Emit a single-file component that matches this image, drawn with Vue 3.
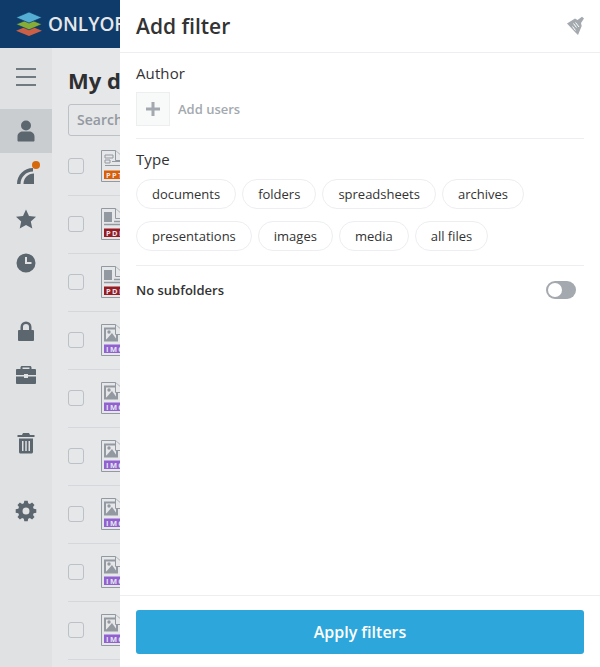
<template>
  <div class="app">
    <header class="topbar">
      <svg class="logo" width="26" height="24" viewBox="0 0 26 24">
        <path d="M13 13.500l13 5.200-13 5.300-13-5.300z" fill="#e2694a" />
        <path d="M13 7l13 5.300-13 5.500-13-5.500z" fill="#95c038" stroke="#0f4071" stroke-width="0.7" />
        <path d="M13 0l13 5.500L13 11 0 5.500z" fill="#5dc0e8" stroke="#0f4071" stroke-width="0.7" />
      </svg>
      <span class="brand">ONLYOFFICE</span>
    </header>

    <div class="body">
      <nav class="nav">
        <div class="burger"><i></i><i></i><i></i></div>
        <div
          v-for="item in navItems"
          :key="item.name"
          :class="['nav-item', { active: item.active, spaced: item.spaced }]"
        >
          <svg width="24" height="24" viewBox="0 0 24 24" fill="#657077">
            <path v-for="d in item.paths" :key="d" :d="d" fill-rule="evenodd" />
            <circle v-if="item.dot" cx="22" cy="2" r="4" fill="#ed7309" />
          </svg>
        </div>
      </nav>

      <main class="main">
        <h1 class="title">My documents</h1>
        <div class="search">Search</div>
        <div v-for="(file, i) in files" :key="i" class="row">
          <span class="check"></span>
          <svg class="file" width="32" height="32" viewBox="0 0 32 32">
            <path d="M.5.5h14l10 9v22H.5z" fill="#fff" stroke="#a3a9ae" />
            <template v-if="file.type === 'IMG'">
              <rect x="4" y="4.500" width="12" height="12" fill="#fff" stroke="#a3a9ae" stroke-width="2" />
              <path d="M5 16l6-7 5 7z" fill="#a3a9ae" />
              <circle cx="8" cy="8" r="1.700" fill="#a3a9ae" />
            </template>
            <template v-else-if="file.type === 'PDF'">
              <rect x="3" y="4" width="8" height="10" fill="#a3a9ae" />
              <path d="M13 13.500h11M3 16.500h21" stroke="#a3a9ae" stroke-width="1.500" />
            </template>
            <template v-else>
              <path d="M4 5h8v3H4zM4 10h5v3H4zM11 11.500h9M4 15.500h16" fill="none" stroke="#a3a9ae" />
            </template>
            <path d="M14.500.5v10h10" fill="#fff" stroke="#a3a9ae" />
            <rect x="3" y="20.500" width="28" height="8.500" :fill="file.color" />
            <text x="5" y="27.500" class="badge-text">{{ file.type }}</text>
          </svg>
        </div>
      </main>
    </div>

    <div class="shade"></div>

    <aside class="panel">
      <div class="panel-head">
        <h2 class="panel-title">Add filter</h2>
        <svg class="clean" width="20" height="20" viewBox="0 0 20 20">
          <path d="M1 7.500L9 2.500l2.500 1.500L16 .8 18 2.500l-3 4.500.7 3-3.700 9-3.500-3.500z" fill="#a3a9ae" />
          <path d="M7.500 7.500l3 4M9.500 6.500l3.500 4.500M6.500 10.500l3 4" stroke="#fff" stroke-width="1" />
        </svg>
      </div>

      <section class="group">
        <div class="label">Author</div>
        <div class="author">
          <span class="add-btn">
            <svg width="14" height="14" viewBox="0 0 14 14"><path d="M5.500 0h3v5.500H14v3H8.500V14h-3V8.500H0v-3h5.500z" fill="#a3a9ae" /></svg>
          </span>
          <span class="add-text">Add users</span>
        </div>
      </section>

      <section class="group type">
        <div class="label">Type</div>
        <div class="chips">
          <span v-for="t in types" :key="t" class="chip">{{ t }}</span>
        </div>
      </section>

      <section class="switch-row">
        <span class="switch-label">No subfolders</span>
        <span class="toggle"><span class="knob"></span></span>
      </section>

      <footer class="panel-foot">
        <button class="apply">Apply filters</button>
      </footer>
    </aside>
  </div>
</template>

<script setup>
const navItems = [
  {
    name: 'my',
    active: true,
    paths: ['M12 1.500a5 5 0 1 1 0 10 5 5 0 0 1 0-10zM3.500 21.500v-4c0-3.500 3-5 5-5h7c2 0 5 1.500 5 5v4c0 .5-.5 1-1 1h-15c-.5 0-1-.5-1-1z']
  },
  {
    name: 'shared',
    dot: true,
    paths: [
      'M3 21C3 12 10 5 19 5v3.500C12 8.500 6.500 14 6.500 21z',
      'M9.500 21C9.500 15 14 10.500 20 10.500V21z'
    ]
  },
  {
    name: 'favorites',
    paths: ['M12 2.500l3 6.500 7 .8-5.200 4.800 1.500 7L12 18l-6.300 3.600 1.500-7L2 9.800 9 9z']
  },
  {
    name: 'recent',
    paths: ['M12 2.500a9.500 9.500 0 1 1 0 19 9.500 9.500 0 0 1 0-19zM11 6v7h6.500v-2H13V6z']
  },
  {
    name: 'private',
    spaced: true,
    paths: ['M5 11h1.500V8a5.500 5.500 0 0 1 11 0v3H19c.5 0 1 .5 1 1v9c0 .5-.5 1-1 1H5c-.5 0-1-.5-1-1v-9c0-.5.500-1 1-1zM9 11h6V8a3 3 0 0 0-6 0z']
  },
  {
    name: 'rooms',
    paths: [
      'M8 3h8c.8 0 1.500.7 1.500 1.500V6H21c.5 0 1 .5 1 1v5h-8v-1h-4v1H2V7c0-.5.500-1 1-1h3.500V4.500C6.500 3.700 7.200 3 8 3zM8.500 4.500V6h7V4.500z',
      'M2 13.500h8V15h4v-1.500h8V20c0 .5-.5 1-1 1H3c-.5 0-1-.5-1-1z'
    ]
  },
  {
    name: 'trash',
    spaced: true,
    paths: ['M9 2h6l1 2h4.500v2h-17V4H8zM5 7.500h14V21c0 .8-.7 1.500-1.500 1.500h-11C5.700 22.500 5 21.800 5 21zM8 10v10h1.500V10zM11.250 10v10h1.500V10zM14.500 10v10H16V10z']
  },
  {
    name: 'settings',
    spaced: true,
    paths: ['M10.300 1.700h3.400l.5 2.600 1.700.7 2.200-1.500 2.400 2.400L19 8.100l.7 1.700 2.600.5v3.400l-2.600.5-.7 1.700 1.500 2.200-2.400 2.400-2.200-1.500-1.700.7-.5 2.600h-3.400l-.5-2.600-1.700-.7-2.200 1.500-2.400-2.400L5 15.900l-.7-1.700-2.600-.5v-3.400l2.600-.5.7-1.700-1.500-2.200 2.400-2.400L8.100 5l1.700-.7zM12 8.500a3.500 3.500 0 1 0 0 7 3.500 3.500 0 0 0 0-7z']
  }
]

const imageFile = { type: 'IMG', color: '#a16ae8' }
const files = [
  { type: 'PPTX', color: '#f36700' },
  { type: 'PDF', color: '#a81c22' },
  { type: 'PDF', color: '#a81c22' },
  imageFile,
  imageFile,
  imageFile,
  imageFile,
  imageFile,
  imageFile
]

const types = [
  'documents',
  'folders',
  'spreadsheets',
  'archives',
  'presentations',
  'images',
  'media',
  'all files'
]
</script>

<style>
body {
  margin: 0;
}
</style>

<style scoped>
.app {
  position: relative;
  width: 600px;
  height: 667px;
  overflow: hidden;
  background: #fff;
  font-family: 'Open Sans', sans-serif;
  color: #333;
}

.topbar {
  display: flex;
  align-items: center;
  gap: 6px;
  height: 48px;
  padding-left: 16px;
  box-sizing: border-box;
  background: #0f4071;
}

.logo {
  flex: none;
}

.brand {
  color: #fff;
  font-size: 19px;
  font-weight: 600;
  white-space: nowrap;
}

.body {
  display: flex;
  height: 619px;
}

.nav {
  flex: 0 0 52px;
  background: #f8f9f9;
  padding-top: 7px;
  box-sizing: border-box;
}

.burger {
  display: flex;
  flex-direction: column;
  justify-content: center;
  gap: 6px;
  height: 44px;
  padding: 0 16px;
  margin-bottom: 10px;
}

.burger i {
  display: block;
  height: 2px;
  background: #7d868c;
}

.nav-item {
  display: flex;
  align-items: center;
  justify-content: center;
  height: 44px;
}

.nav-item svg {
  overflow: visible;
}

.nav-item.active {
  background: #dfe2e3;
}

.nav-item.spaced {
  margin-top: 24px;
}

.main {
  flex: 1;
  padding: 16px 16px 0 16px;
  min-width: 0;
}

.title {
  margin: 0 0 8px;
  font-size: 22px;
  font-weight: 700;
  line-height: 32px;
  white-space: nowrap;
}

.search {
  box-sizing: border-box;
  height: 32px;
  padding-left: 8px;
  border: 1px solid #d0d5da;
  border-radius: 3px;
  font-size: 14px;
  font-weight: 600;
  line-height: 30px;
  color: #a3a9ae;
  margin-bottom: 2px;
}

.row {
  display: flex;
  align-items: center;
  box-sizing: border-box;
  height: 58px;
  padding-bottom: 1px;
  border-bottom: 1px solid #eceef1;
}

.check {
  flex: none;
  box-sizing: border-box;
  width: 16px;
  height: 16px;
  border: 1px solid #d0d5da;
  border-radius: 3px;
  margin-right: 17px;
  background: #fff;
}

.file {
  flex: none;
}

.badge-text {
  font-family: 'Open Sans', sans-serif;
  font-size: 7.5px;
  font-weight: 700;
  letter-spacing: 1.4px;
  fill: #fff;
}

.shade {
  position: absolute;
  inset: 0;
  background: rgba(6, 22, 38, 0.1);
}

.panel {
  position: absolute;
  top: 0;
  right: 0;
  bottom: 0;
  width: 480px;
  display: flex;
  flex-direction: column;
  background: #fff;
}

.panel-head {
  display: flex;
  align-items: center;
  justify-content: space-between;
  box-sizing: border-box;
  height: 53px;
  padding: 0 14px 0 16px;
  border-bottom: 1px solid #eceef1;
}

.panel-title {
  margin: 0;
  font-size: 21px;
  font-weight: 600;
  line-height: 28px;
}

.group {
  margin: 0 16px;
  padding-top: 10px;
  border-bottom: 1px solid #eceef1;
}

.label {
  font-size: 15px;
  font-weight: 500;
  letter-spacing: 0.1px;
  line-height: 20px;
}

.author {
  display: flex;
  align-items: center;
  gap: 8px;
  margin-top: 9px;
  padding-bottom: 12px;
}

.add-btn {
  display: flex;
  align-items: center;
  justify-content: center;
  box-sizing: border-box;
  width: 34px;
  height: 34px;
  background: #f8f9f9;
  border: 1px solid #eceef1;
}

.add-text {
  font-size: 13px;
  font-weight: 600;
  color: #a3a9ae;
}

.type {
  padding-top: 10px;
}

.chips {
  display: flex;
  flex-wrap: wrap;
  gap: 12px 6px;
  margin-top: 10px;
  padding-bottom: 14px;
}

.chip {
  box-sizing: border-box;
  height: 30px;
  padding: 0 15px;
  border: 1px solid #eceef1;
  border-radius: 15px;
  font-size: 13px;
  line-height: 28px;
}

.switch-row {
  display: flex;
  align-items: center;
  justify-content: space-between;
  margin: 0 24px 0 16px;
  padding-top: 15px;
}

.switch-label {
  font-size: 13px;
  font-weight: 600;
  line-height: 18px;
}

.toggle {
  display: block;
  box-sizing: border-box;
  width: 30px;
  height: 18px;
  padding: 2px;
  border-radius: 9px;
  background: #a3a9ae;
}

.knob {
  display: block;
  width: 14px;
  height: 14px;
  border-radius: 50%;
  background: #fff;
}

.panel-foot {
  margin-top: auto;
  padding: 14px 16px 13px;
  border-top: 1px solid #eceef1;
}

.apply {
  display: block;
  width: 100%;
  height: 44px;
  border: none;
  border-radius: 3px;
  background: #2da7db;
  color: #fff;
  font-family: inherit;
  font-size: 16px;
  font-weight: 600;
}
</style>
